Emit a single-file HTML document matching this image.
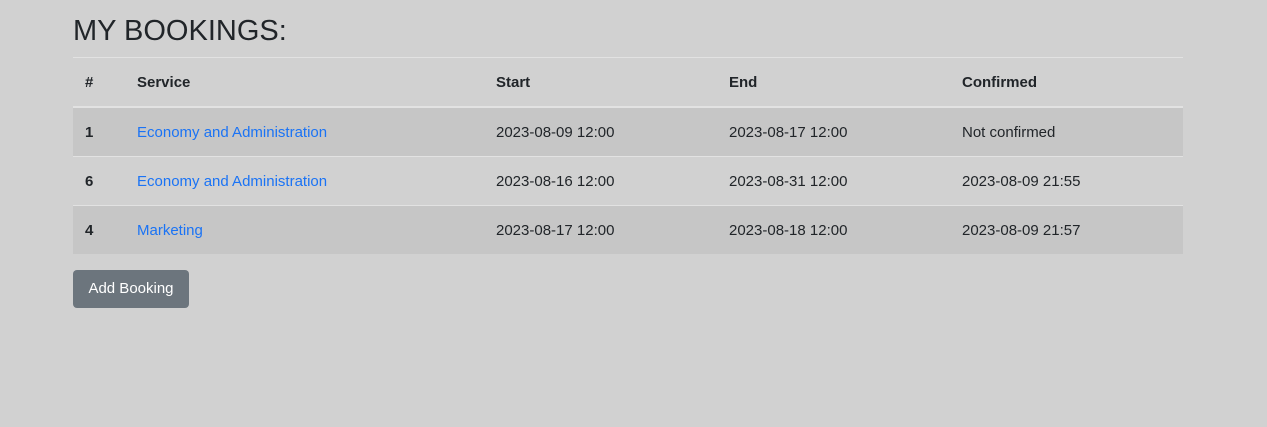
<!DOCTYPE html>
<html><head><style>
body{margin:0;background:#d1d1d1;font-family:"Liberation Sans",Arial,sans-serif;color:#212529;width:1267px;height:427px;overflow:hidden}
.c{position:absolute;left:73px;top:0;width:1110px}
h1{margin:0;position:absolute;top:12px;left:0;font-size:29px;font-weight:400;line-height:38px}
table{position:absolute;top:57px;left:0;width:1110px;border-collapse:collapse;font-size:15px;table-layout:fixed}
th,td{padding:0 12px;text-align:left;border-top:1px solid #e2e2e2}
th{height:48px;font-weight:bold;border-bottom:2px solid #e2e2e2}
td{height:48px}
tr.s td{background:#c6c6c6}
a{color:#1a73f5;text-decoration:none}
td:first-child{font-weight:bold}
.b{position:absolute;top:270px;left:0;width:116px;height:38px;background:#6c757d;color:#fff;border-radius:4px;font-size:15px;line-height:38px;text-align:center}
</style></head><body><div class="c">
<h1>MY BOOKINGS:</h1>
<table>
<colgroup><col style="width:52px"><col style="width:359px"><col style="width:233px"><col style="width:233px"><col></colgroup>
<tr><th>#</th><th>Service</th><th>Start</th><th>End</th><th>Confirmed</th></tr>
<tr class="s"><td>1</td><td><a>Economy and Administration</a></td><td>2023-08-09 12:00</td><td>2023-08-17 12:00</td><td>Not confirmed</td></tr>
<tr><td>6</td><td><a>Economy and Administration</a></td><td>2023-08-16 12:00</td><td>2023-08-31 12:00</td><td>2023-08-09 21:55</td></tr>
<tr class="s"><td>4</td><td><a>Marketing</a></td><td>2023-08-17 12:00</td><td>2023-08-18 12:00</td><td>2023-08-09 21:57</td></tr>
</table>
<div class="b">Add Booking</div>
</div></body></html>
